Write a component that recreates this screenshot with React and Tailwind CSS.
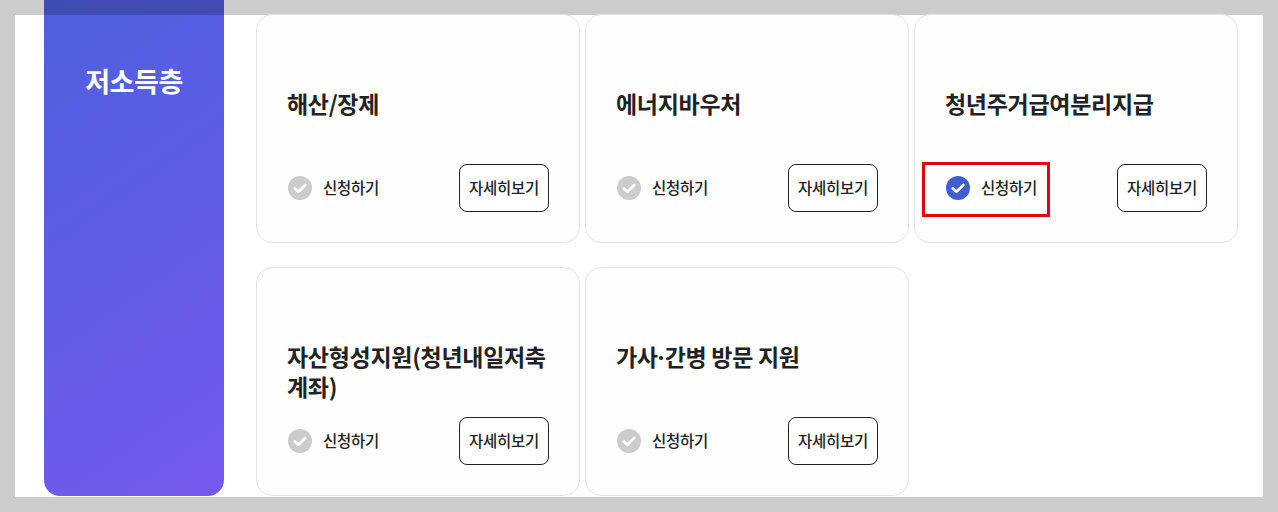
import React from 'react';

const cards = [
  { title: '해산/장제' },
  { title: '에너지바우처' },
  { title: '청년주거급여분리지급', checked: true },
  { title: '자산형성지원(청년내일저축계좌)' },
  { title: <>가사<span className="font-['Noto_Sans'] tracking-[0.5px]">·</span>간병 방문 지원</> },
];

const CheckIcon = ({ active }) => (
  <svg width="24" height="24" viewBox="0 0 24 24" className="shrink-0">
    <circle cx="12" cy="12" r="12" fill={active ? '#3f5fd0' : '#cccccc'} />
    <path d="M6.8 12.4l3.6 3.4 6.9-6.9" fill="none" stroke="#fff" strokeWidth="2.8" strokeLinecap="round" strokeLinejoin="round" />
  </svg>
);

const Card = ({ title, checked }) => (
  <div className="relative h-[229px] rounded-[16px] border border-[#e3e3e3] bg-[#fefefe] px-[30px] flex flex-col">
    <div className="h-[149px] pt-[73px]">
      <h3 className="text-[23px] leading-[30px] font-bold tracking-[-0.3px] text-[#222]">{title}</h3>
    </div>
    <div className="flex items-center justify-between">
      <div className="relative flex items-center gap-[11px] pl-px">
        <CheckIcon active={checked} />
        <span className="text-[15.5px] font-medium tracking-[-0.25px] text-[#222]">신청하기</span>
        {checked && <div className="absolute left-[-23px] top-[-14px] w-[128px] h-[55px] border-[3px] border-[#e60012]" />}
      </div>
      <button className="w-[90px] h-[48px] rounded-[8px] border border-[#222] bg-white text-[15.5px] font-medium tracking-[-0.25px] text-[#222]">자세히보기</button>
    </div>
  </div>
);

export default function App() {
  return (
    <div className="w-[1278px] h-[512px] bg-[#cccccc] p-[15px] overflow-hidden font-['Noto_Sans_CJK_KR','Noto_Sans',sans-serif]">
      <div className="h-[482px] bg-white flex pl-[29px]">
        <aside className="relative shrink-0 w-[180px] h-[496px] -mt-[15px] rounded-b-[16px] bg-[linear-gradient(145deg,#4d60dd,#7559ee)] text-center pt-[61px] text-white text-[27px] leading-[40px] font-bold tracking-[-0.45px]">
          <div className="absolute top-0 left-0 right-0 h-[15px] bg-black/20" />
          저소득층
        </aside>
        <div className="ml-[32px] -mt-px grid grid-cols-[324px_324px_324px] gap-x-[5px] gap-y-[24px] content-start">
          {cards.map((c, i) => <Card key={i} {...c} />)}
        </div>
      </div>
    </div>
  );
}
